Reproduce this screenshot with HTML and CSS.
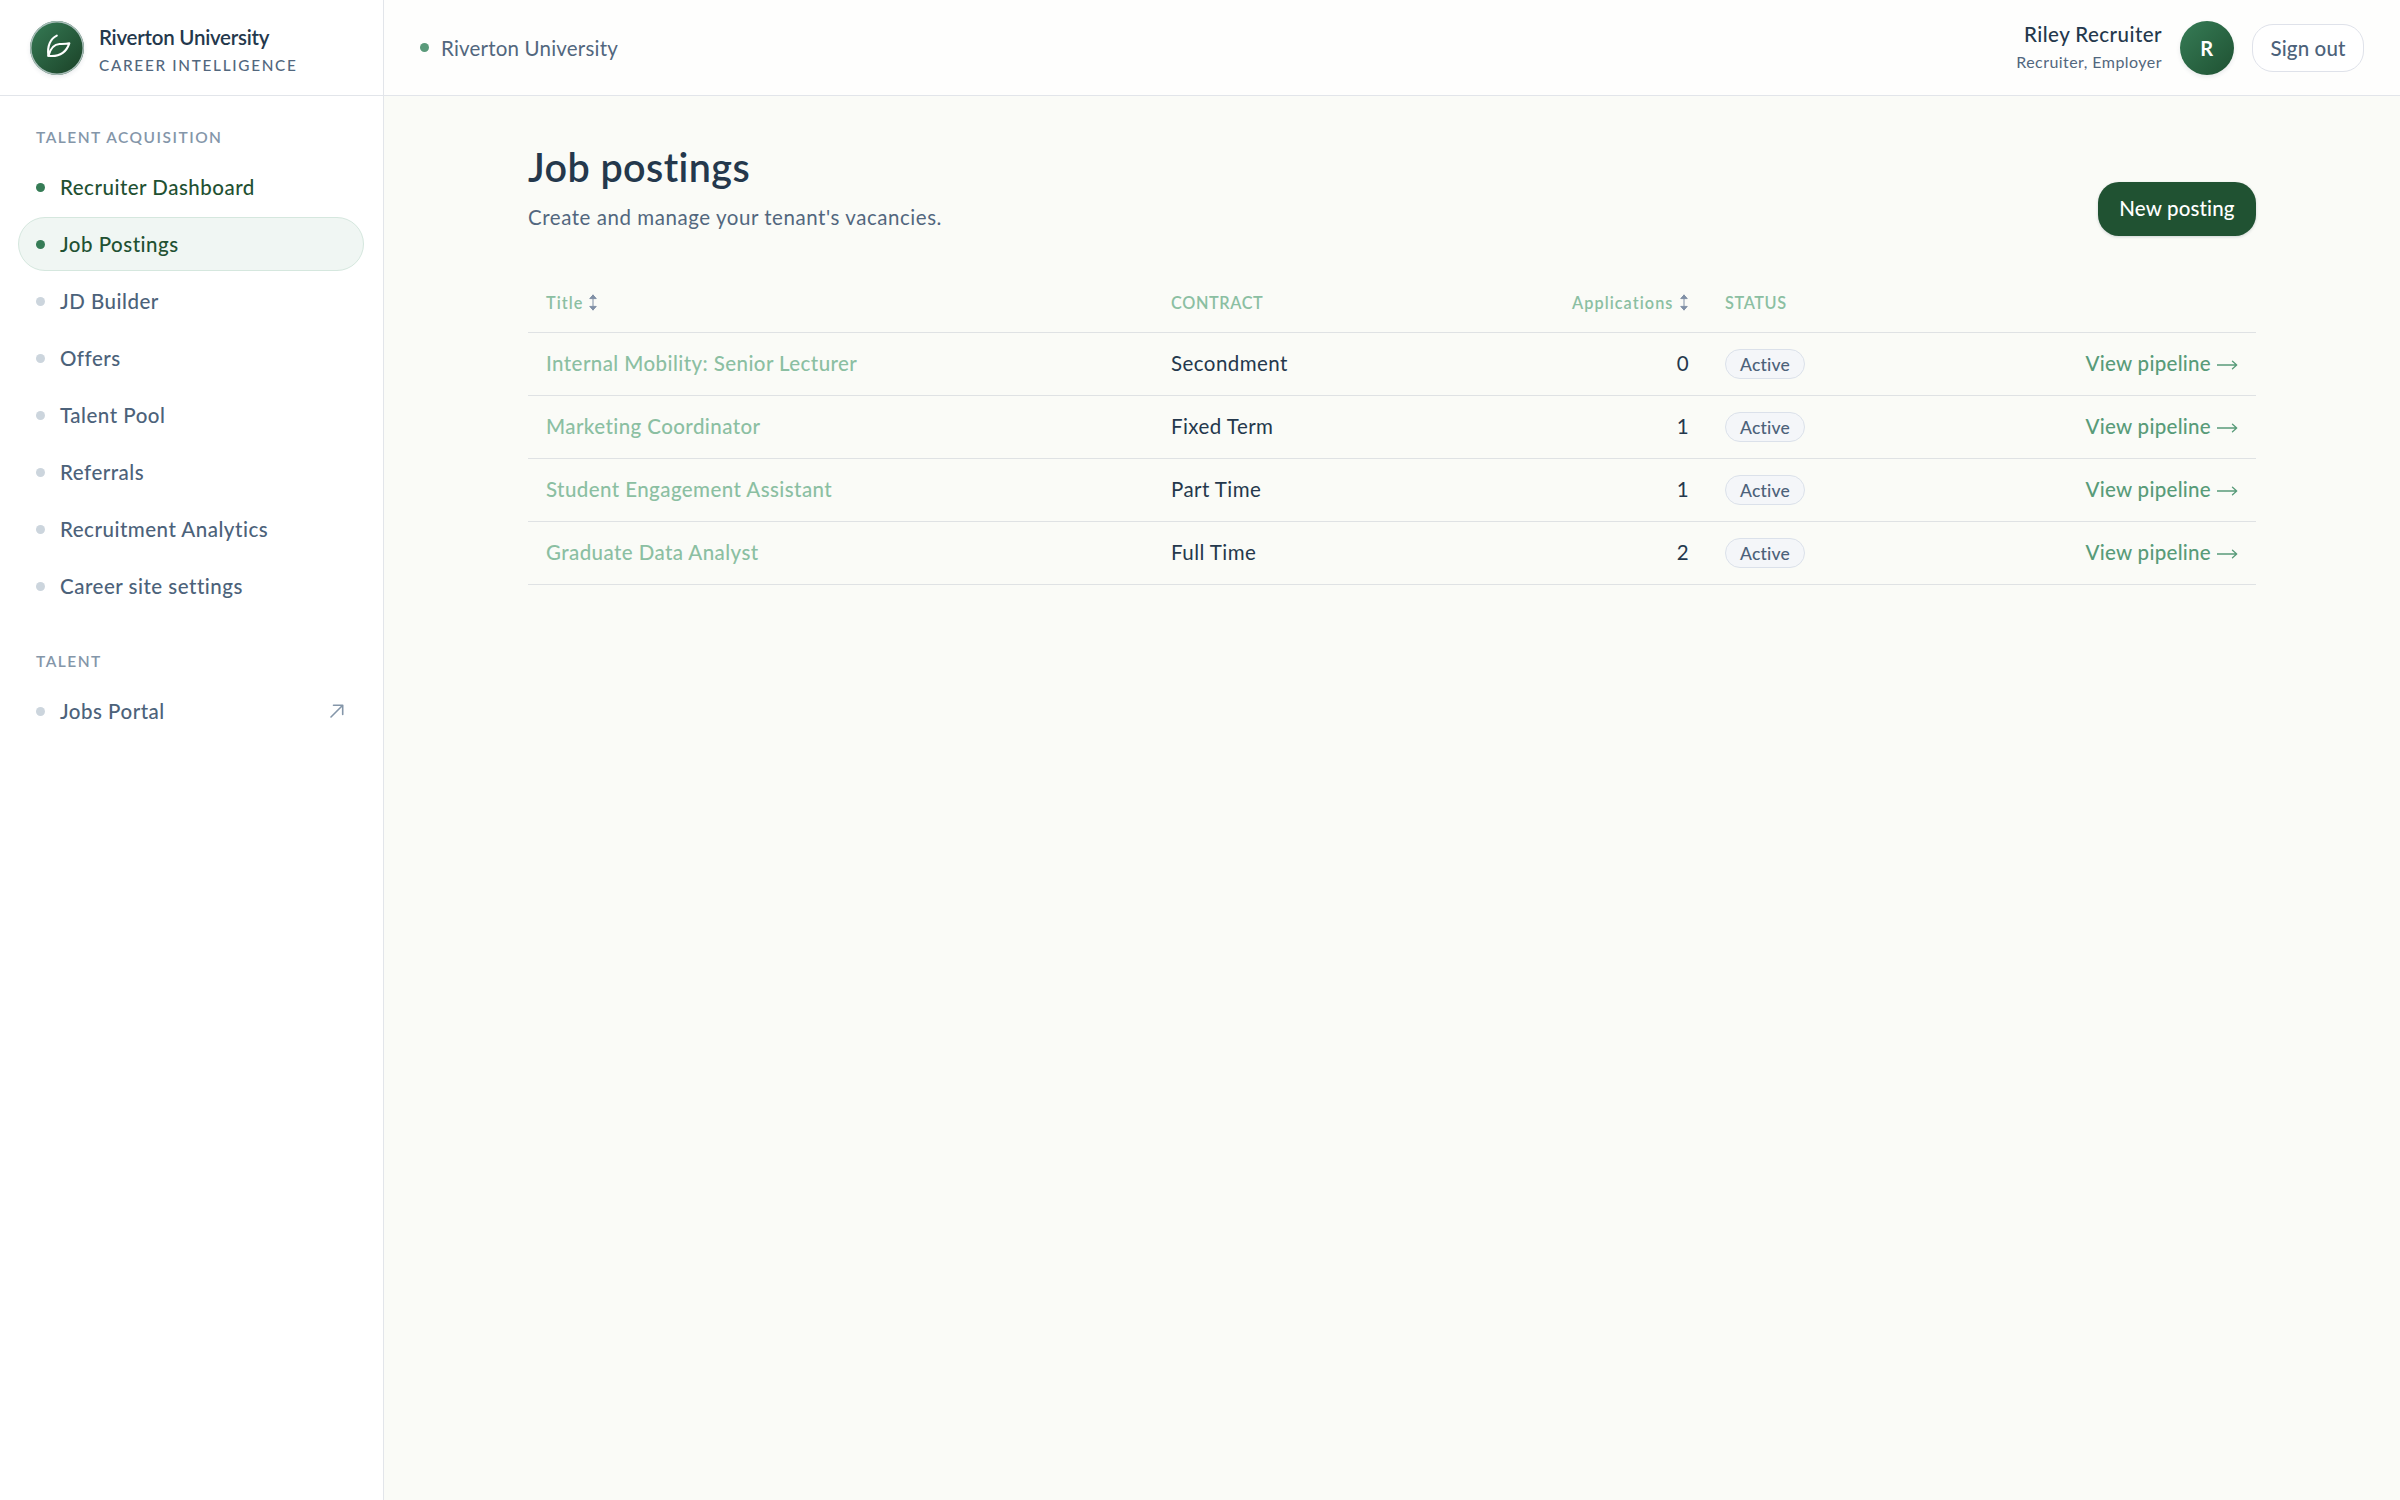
FILE: index.html
```html
<!DOCTYPE html>
<html lang="en">
<head>
  <meta charset="UTF-8">
  <meta name="viewport" content="width=device-width, initial-scale=1.0">
  <title>Job postings</title>
  <link rel="stylesheet" href="styles.css">
</head>
<body>
  <aside class="sidebar">
    <div class="brand">
      <div class="logo">
        <svg viewBox="0 0 54 54" width="54" height="54">
          <path d="M26.8 14.6C20.5 17.5 17 25 18.4 34.8"/>
          <path d="M18.4 34.8C20 29 23.5 23.2 29.5 23C33 22.9 36 23 39.3 22.3C36.5 30.5 30 36 18.4 34.8Z"/>
        </svg>
      </div>
      <div class="brand-text">
        <div class="brand-name">Riverton University</div>
        <div class="brand-sub">CAREER INTELLIGENCE</div>
      </div>
    </div>
    <nav>
      <h2>TALENT ACQUISITION</h2>
      <ul>
        <li><a class="open" href="#">Recruiter Dashboard</a></li>
        <li><a class="open active" href="#">Job Postings</a></li>
        <li><a href="#">JD Builder</a></li>
        <li><a href="#">Offers</a></li>
        <li><a href="#">Talent Pool</a></li>
        <li><a href="#">Referrals</a></li>
        <li><a href="#">Recruitment Analytics</a></li>
        <li><a href="#">Career site settings</a></li>
      </ul>
      <h2>TALENT</h2>
      <ul>
        <li>
          <a href="#">Jobs Portal
            <svg class="external" viewBox="0 0 14 14" width="14" height="14"><path d="M1 13L12.7 1.3M3.5 1.3H12.7V10.5"/></svg>
          </a>
        </li>
      </ul>
    </nav>
  </aside>
  <div class="page">
    <header class="topbar">
      <div class="tenant">Riverton University</div>
      <div class="user">
        <div class="user-text">
          <div class="user-name">Riley Recruiter</div>
          <div class="user-role">Recruiter, Employer</div>
        </div>
        <div class="avatar">R</div>
        <button class="sign-out">Sign out</button>
      </div>
    </header>
    <main>
      <div class="heading">
        <div class="heading-text">
          <h1>Job postings</h1>
          <p>Create and manage your tenant's vacancies.</p>
        </div>
        <button class="new-posting">New posting</button>
      </div>
      <table>
        <thead>
          <tr>
            <th class="col-title">
              <span class="sort">Title<svg viewBox="0 0 8 17" width="8" height="17"><path d="M4 1V16M1 4.3L4 1L7 4.3ZM1 12.7L4 16L7 12.7Z"/></svg></span>
            </th>
            <th class="col-contract">CONTRACT</th>
            <th class="col-apps">
              <span class="sort">Applications<svg viewBox="0 0 8 17" width="8" height="17"><path d="M4 1V16M1 4.3L4 1L7 4.3ZM1 12.7L4 16L7 12.7Z"/></svg></span>
            </th>
            <th class="col-status">STATUS</th>
            <th class="col-link"></th>
          </tr>
        </thead>
        <tbody>
          <tr>
            <td class="title">Internal Mobility: Senior Lecturer</td>
            <td>Secondment</td>
            <td class="number">0</td>
            <td class="status"><span class="badge">Active</span></td>
            <td class="link"><a href="#">View pipeline<svg viewBox="0 0 21 10" width="21" height="10"><path d="M0 5H19.5M15.5 1.2L19.7 5L15.5 8.8"/></svg></a></td>
          </tr>
          <tr>
            <td class="title">Marketing Coordinator</td>
            <td>Fixed Term</td>
            <td class="number">1</td>
            <td class="status"><span class="badge">Active</span></td>
            <td class="link"><a href="#">View pipeline<svg viewBox="0 0 21 10" width="21" height="10"><path d="M0 5H19.5M15.5 1.2L19.7 5L15.5 8.8"/></svg></a></td>
          </tr>
          <tr>
            <td class="title">Student Engagement Assistant</td>
            <td>Part Time</td>
            <td class="number">1</td>
            <td class="status"><span class="badge">Active</span></td>
            <td class="link"><a href="#">View pipeline<svg viewBox="0 0 21 10" width="21" height="10"><path d="M0 5H19.5M15.5 1.2L19.7 5L15.5 8.8"/></svg></a></td>
          </tr>
          <tr>
            <td class="title">Graduate Data Analyst</td>
            <td>Full Time</td>
            <td class="number">2</td>
            <td class="status"><span class="badge">Active</span></td>
            <td class="link"><a href="#">View pipeline<svg viewBox="0 0 21 10" width="21" height="10"><path d="M0 5H19.5M15.5 1.2L19.7 5L15.5 8.8"/></svg></a></td>
          </tr>
        </tbody>
      </table>
    </main>
  </div>
</body>
</html>
```
FILE: styles.css
```css
* {
  margin: 0;
  padding: 0;
  box-sizing: border-box;
}

body {
  display: flex;
  min-height: 100vh;
  background-color: #fafbf7;
  color: #24384c;
  font-family: Lato, "Open Sans", sans-serif;
  font-size: 20.5px;
  letter-spacing: 0.45px;
}

a {
  color: inherit;
  text-decoration: none;
}

button {
  font: inherit;
  font-weight: 500;
}

svg {
  fill: none;
  stroke: currentColor;
  stroke-linecap: round;
  stroke-linejoin: round;
}

/* sidebar */
.sidebar {
  flex: none;
  width: 384px;
  background-color: white;
  border-right: 1px solid #e2e5ea;
}

.brand {
  display: flex;
  align-items: center;
  gap: 15px;
  height: 96px;
  padding-left: 30px;
  border-bottom: 1px solid #e2e5ea;
}

.logo {
  width: 54px;
  height: 54px;
  border-radius: 50%;
  background: linear-gradient(135deg, #367c56, #1a4026);
  box-shadow: inset 0 0 0 1.5px #a9bdb9, 0 2px 4px rgba(36, 56, 76, 0.1);
  color: white;
}
.logo svg {
  display: block;
  stroke-width: 2.1;
}

.brand-text {
  padding-top: 7px;
  line-height: 28px;
}

.brand-name {
  font-weight: 600;
  letter-spacing: -0.25px;
}

.brand-sub {
  color: #52677e;
  font-size: 15.3px;
  font-weight: 500;
  letter-spacing: 1.7px;
}

nav {
  padding: 25.5px 19px 0 18px;
}

nav h2 {
  height: 38.5px;
  padding-left: 18px;
  color: #8496a9;
  font-size: 15.5px;
  font-weight: 600;
  line-height: 31px;
  letter-spacing: 1.5px;
}

nav ul {
  display: grid;
  gap: 3px;
  margin-bottom: 32.5px;
  list-style: none;
}

nav a {
  display: flex;
  align-items: center;
  gap: 15px;
  height: 54px;
  padding: 0 17px;
  border: 1px solid transparent;
  border-radius: 27px;
  color: #4c627a;
  font-weight: 500;
  letter-spacing: 0.5px;
}
nav a::before {
  content: "";
  width: 9px;
  height: 9px;
  border-radius: 50%;
  background-color: #ccd5dd;
}
nav a.open {
  color: #1f5132;
}
nav a.open::before {
  background-color: #367c56;
}
nav a.active {
  background-color: #f0f6f3;
  border-color: #d5e7de;
}

.external {
  margin-left: auto;
  margin-right: 2px;
  color: #8496a9;
  stroke-width: 1.6;
}

/* top bar */
.page {
  flex: 1;
}

.topbar {
  display: flex;
  align-items: center;
  justify-content: space-between;
  height: 96px;
  padding: 0 36px;
  background-color: #fefefd;
  border-bottom: 1px solid #e2e5ea;
}

.tenant {
  display: flex;
  align-items: center;
  gap: 12px;
  color: #52677e;
  letter-spacing: 0.2px;
}
.tenant::before {
  content: "";
  width: 9px;
  height: 9px;
  border-radius: 50%;
  background-color: #5a9a7a;
}

.user {
  display: flex;
  align-items: center;
  gap: 18px;
}

.user-text {
  padding-top: 1px;
  text-align: right;
  line-height: 28px;
}

.user-name {
  font-weight: 500;
}

.user-role {
  color: #52677e;
  font-size: 16px;
}

.avatar {
  width: 54px;
  height: 54px;
  border-radius: 50%;
  background: linear-gradient(135deg, #367c56, #1f5132);
  box-shadow: 0 2px 4px rgba(36, 56, 76, 0.1);
  color: white;
  font-size: 20px;
  font-weight: 700;
  line-height: 54px;
  text-align: center;
}

.sign-out {
  width: 112px;
  height: 48px;
  border: 1px solid #dfe2ea;
  border-radius: 21px;
  background-color: white;
  color: #4c627a;
  letter-spacing: 0.15px;
}

/* content */
main {
  width: 1728px;
  margin: 0 auto;
  padding-top: 48px;
}

.heading {
  display: flex;
  align-items: flex-end;
  justify-content: space-between;
  height: 91.5px;
}

.heading-text {
  align-self: flex-start;
}

h1 {
  font-size: 39.5px;
  font-weight: 600;
  line-height: 46px;
  letter-spacing: 0.4px;
}

.heading p {
  margin-top: 12px;
  color: #52677e;
  line-height: 30px;
  letter-spacing: 0.55px;
}

.new-posting {
  width: 158px;
  height: 54px;
  padding-bottom: 1px;
  border: none;
  border-radius: 21px;
  background-color: #205232;
  box-shadow: 0 1px 3px rgba(36, 56, 76, 0.2);
  color: white;
  letter-spacing: 0.15px;
}

table {
  width: 100%;
  margin-top: 36px;
  border-collapse: separate;
  border-spacing: 0;
  table-layout: fixed;
}

th,
td {
  height: 63px;
  padding: 0 18px;
  border-bottom: 1px solid #dfe2e4;
  text-align: left;
  white-space: nowrap;
}

td {
  padding-bottom: 1px;
}

th {
  height: 61px;
  padding-top: 1px;
  color: #8bbfa2;
  font-size: 16.3px;
  font-weight: 600;
  letter-spacing: 0.6px;
}

.col-title {
  width: 625px;
}

.col-contract {
  width: 279px;
}

.col-apps {
  width: 275px;
  padding-right: 19.5px;
  text-align: right;
}

.col-status {
  width: 200px;
}

.sort {
  display: inline-flex;
  align-items: center;
  gap: 6px;
  letter-spacing: 1.05px;
}
.sort svg {
  color: #8090a6;
  fill: currentColor;
}

.title {
  color: #8bbfa2;
  font-weight: 500;
  letter-spacing: 0.42px;
}

.number {
  text-align: right;
}

.status {
  padding-bottom: 0;
}

.badge {
  display: inline-block;
  height: 30px;
  padding: 0 14px;
  border: 1px solid #dbe1ea;
  border-radius: 15px;
  background-color: #f4f6f9;
  color: #4c627a;
  font-size: 17.5px;
  font-weight: 500;
  line-height: 29px;
  letter-spacing: 0.2px;
  vertical-align: middle;
}

.link {
  color: #589b79;
  font-weight: 500;
  letter-spacing: 0.28px;
  text-align: right;
}
.link a {
  display: inline-flex;
  align-items: center;
  gap: 6px;
}
.link svg {
  margin-top: 3px;
  stroke-width: 1.3;
}
```
